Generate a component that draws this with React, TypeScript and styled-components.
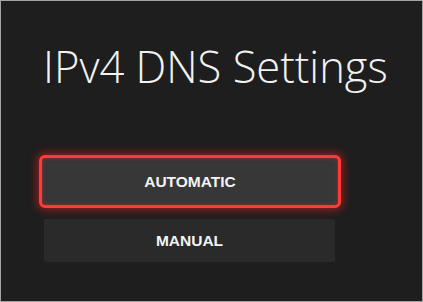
import styled, { createGlobalStyle } from "styled-components";

const GlobalStyle = createGlobalStyle`
  html, body {
    margin: 0;
    padding: 0;
    background: #1e1e1e;
  }
  * {
    box-sizing: border-box;
  }
`;

const options = [
  { label: "AUTOMATIC", focused: true },
  { label: "MANUAL", focused: false },
];

function App() {
  return (
    <>
      <GlobalStyle />
      <Screen>
        <Title>IPv4 DNS Settings</Title>
        <OptionList>
          {options.map((option) => (
            <OptionButton key={option.label} focused={option.focused}>
              {option.label}
            </OptionButton>
          ))}
        </OptionList>
      </Screen>
    </>
  );
}

const Screen = styled.div`
  width: 423px;
  height: 302px;
  border: 1px solid #a3a3a3;
  background-color: #1e1e1e;
  padding: 38px 0 0 43px;
  font-family: "Liberation Sans", Arial, sans-serif;
  display: flex;
  flex-direction: column;
`;

const Title = styled.h1`
  margin: 0 0 0 -1px;
  font-family: "Open Sans", sans-serif;
  font-weight: 300;
  font-size: 43.5px;
  line-height: 56px;
  color: #f2f2f2;
  white-space: nowrap;
`;

const OptionList = styled.div`
  display: flex;
  flex-direction: column;
  align-items: flex-start;
  gap: 11px;
  margin-top: 60px;
`;

type OptionProps = {
  focused: boolean;
};

const OptionButton = styled.button.withConfig({
  shouldForwardProp: (prop) => prop !== "focused",
})<OptionProps>`
  display: flex;
  align-items: center;
  justify-content: center;
  width: ${(p) => (p.focused ? "302px" : "291px")};
  height: ${(p) => (p.focused ? "53px" : "43px")};
  margin-left: ${(p) => (p.focused ? "-5px" : "0")};
  padding: 0;
  border: ${(p) => (p.focused ? "3px solid #ff3a3a" : "none")};
  border-radius: ${(p) => (p.focused ? "6px" : "2px")};
  background-color: ${(p) => (p.focused ? "#373737" : "#2a2a2a")};
  box-shadow: ${(p) =>
    p.focused
      ? "0 0 8px 2px rgba(230, 30, 30, 0.6), inset 0 0 4px rgba(255, 40, 40, 0.45)"
      : "none"};
  color: #f4f4f4;
  font-family: "Liberation Sans", Arial, sans-serif;
  font-weight: 700;
  font-size: 15.5px;
  cursor: pointer;
`;

export default App;
